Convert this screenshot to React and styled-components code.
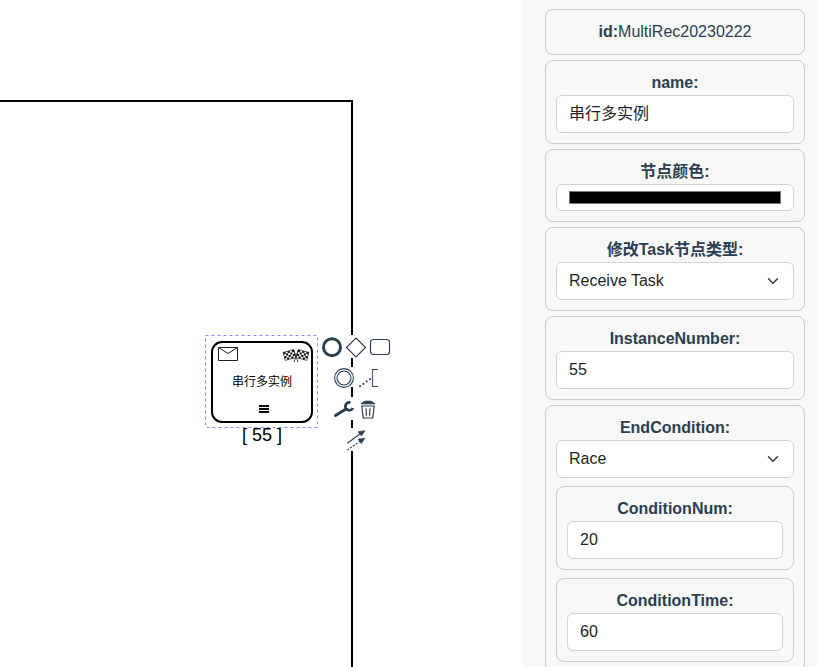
import React from "react";
import styled, { createGlobalStyle } from "styled-components";

const Global = createGlobalStyle`
  * { box-sizing: border-box; }
  body { margin: 0; overflow: hidden; background: #fff; }
`;

const Page = styled.div`
  display: flex;
  width: 817px;
  height: 667px;
  overflow: hidden;
  font: 16px/24px "Liberation Sans", "Noto Sans CJK SC", sans-serif;
  color: #2c3e50;
`;

const Canvas = styled.main`
  position: relative;
  flex: 1;
  min-width: 0;
`;

const Diagram = styled.svg`
  display: block;
  width: 100%;
  height: 100%;
`;

const ContextPad = styled.div`
  position: absolute;
  left: 320px;
  top: 332px;
  width: 72px;
  display: flex;
  flex-direction: column;
`;

const PadRow = styled.div`
  display: flex;
  justify-content: center;
  height: 31px;
`;

const PadEntry = styled.svg`
  display: block;
  width: 24px;
  height: ${(p) => p.$height || 23}px;
  margin-top: ${(p) => p.$offset || 3}px;
  background: #fff;
  overflow: visible;
  fill: none;
  stroke: #2c3e50;
`;

const Panel = styled.aside`
  display: flex;
  flex-direction: column;
  gap: 5px;
  width: 293px;
  padding: 9px 12px 0 21px;
  background: #f8f8f8;
  box-shadow: 0 0 5px #eee;
`;

const Card = styled.section`
  flex: none;
  border: 1px solid #ccc;
  border-radius: 8px;
  padding: 10px;
  text-align: center;
`;

const NestedCard = styled(Card)`
  margin-top: 8px;
`;

const Label = styled.label`
  display: block;
  height: 24px;
  font-weight: 700;
`;

const IdLine = styled.div`
  height: 24px;
`;

const Control = styled.div`
  display: flex;
  align-items: center;
  justify-content: space-between;
  height: ${(p) => (p.$slim ? 27 : 38)}px;
  padding: ${(p) => (p.$slim ? "6px 12px" : "0 12px")};
  border: 1px solid #ced4da;
  border-radius: 6px;
  background: #fff;
  color: #212529;
`;

const Swatch = styled.span`
  flex: 1;
  height: 13px;
  border: 1px solid #777;
  background: #000;
`;

const Chevron = styled.svg`
  width: 16px;
  height: 12px;
  fill: none;
  stroke: #343a40;
  stroke-width: 2;
  stroke-linecap: round;
  stroke-linejoin: round;
`;

function Field({ label, value, select, nested, children }) {
  const Wrapper = nested ? NestedCard : Card;
  return (
    <Wrapper>
      <Label>{label}</Label>
      <Control>
        <span>{value}</span>
        {select && (
          <Chevron viewBox="0 0 16 16">
            <path d="m2 5 6 6 6-6" />
          </Chevron>
        )}
      </Control>
      {children}
    </Wrapper>
  );
}

function Flag() {
  const cells = [];
  for (let row = 0; row < 4; row++)
    for (let col = row % 2; col < 5; col += 2)
      cells.push(<rect key={`${row}-${col}`} x={col} y={row} width="1" height="1" />);
  return (
    <g>
      <g transform="matrix(2.1 -0.55 0.5 2.0 2.2 4.4)" fill="#111">
        <rect width="5" height="4" fill="#fff" stroke="#222" strokeWidth="0.3" />
        {cells}
      </g>
      <path d="M12.6 1.5L17 14" stroke="#222" strokeWidth="0.9" fill="none" />
    </g>
  );
}

function TaskNode() {
  return (
    <g>
      <rect x="205.5" y="335.5" width="112" height="92" fill="none" stroke="#8888ff" strokeDasharray="3 3" />
      <rect x="212" y="342" width="100" height="80" rx="10" fill="#fff" stroke="#000" strokeWidth="2" />
      <path d="M218.5 347.5h19v13h-19zl9.5 6 9.5-6" fill="#fff" stroke="#222" />
      <g transform="translate(281 348)">
        <Flag />
      </g>
      <g transform="translate(311 348) scale(-1 1)">
        <Flag />
      </g>
      <text x="262" y="386" textAnchor="middle" fontSize="12" fill="#000">串行多实例</text>
      <path d="M259 406h10M259 409h10M259 412h10" stroke="#000" strokeWidth="2" />
      <text x="262" y="441" textAnchor="middle" fontSize="18" fill="#000">[ 55 ]</text>
    </g>
  );
}

export default function App() {
  return (
    <Page>
      <Global />
      <Canvas>
        <Diagram>
          <path d="M0 101H352V667" fill="none" stroke="#000" strokeWidth="2" />
          <TaskNode />
        </Diagram>
        <ContextPad>
          <PadRow>
            <PadEntry viewBox="0 0 24 23">
              <circle cx="12" cy="12.3" r="8.5" strokeWidth="3" />
            </PadEntry>
            <PadEntry viewBox="0 0 24 23">
              <path d="M12 3l9.5 9.5L12 22l-9.5-9.5z" strokeWidth="1.2" />
            </PadEntry>
            <PadEntry viewBox="0 0 24 23">
              <rect x="2.5" y="4.5" width="19" height="15" rx="3" strokeWidth="1.2" />
            </PadEntry>
          </PadRow>
          <PadRow>
            <PadEntry viewBox="0 0 24 20" $height={20} $offset={4}>
              <circle cx="12" cy="11" r="9.4" strokeWidth="1.1" />
              <circle cx="12" cy="11" r="7" strokeWidth="1.1" />
            </PadEntry>
            <PadEntry viewBox="0 0 24 20" $height={20} $offset={4}>
              <path d="M16.5 2.5v17" stroke="#6b4a94" strokeWidth="1.2" />
              <path d="M22 2.5h-6M22 19.5h-6" strokeWidth="1" />
              <path d="M4 19.2L15 11.4" strokeWidth="2" strokeLinecap="round" strokeDasharray="0.1 4" />
            </PadEntry>
          </PadRow>
          <PadRow>
            <PadEntry viewBox="0 0 24 23">
              <path d="M3.5 18.5L14 12" strokeWidth="3" strokeLinecap="round" />
              <path d="M20.8 11A3.9 3.9 0 1 1 18.5 5.6" strokeWidth="2.8" />
            </PadEntry>
            <PadEntry viewBox="0 0 24 23">
              <path d="M5 6.8L9 4.2h6L19 6.8z" fill="#2c3e50" />
              <path d="M5.8 9h12.4L16.8 21H7.2zM10 11.2l.5 7.5M14 11.2l-.5 7.5" strokeWidth="1.2" />
            </PadEntry>
          </PadRow>
          <PadRow>
            <PadEntry viewBox="0 0 24 23">
              <path d="M3.3 15.3L16 6" strokeWidth="1.1" />
              <path d="M3.3 22L16 13.4" strokeWidth="1.1" strokeDasharray="2 1.4" />
              <path d="M21 2.7L17.3 8 14 3.7zM21 10.2l-3.7 5.3L14 11.2z" fill="#2c3e50" strokeWidth="0.6" />
            </PadEntry>
          </PadRow>
        </ContextPad>
      </Canvas>
      <Panel>
        <Card>
          <IdLine>
            <b>id:</b>MultiRec20230222
          </IdLine>
        </Card>
        <Field label="name:" value="串行多实例" />
        <Card>
          <Label>节点颜色:</Label>
          <Control $slim>
            <Swatch />
          </Control>
        </Card>
        <Field label="修改Task节点类型:" value="Receive Task" select />
        <Field label="InstanceNumber:" value="55" />
        <Field label="EndCondition:" value="Race" select>
          <Field nested label="ConditionNum:" value="20" />
          <Field nested label="ConditionTime:" value="60" />
        </Field>
      </Panel>
    </Page>
  );
}
